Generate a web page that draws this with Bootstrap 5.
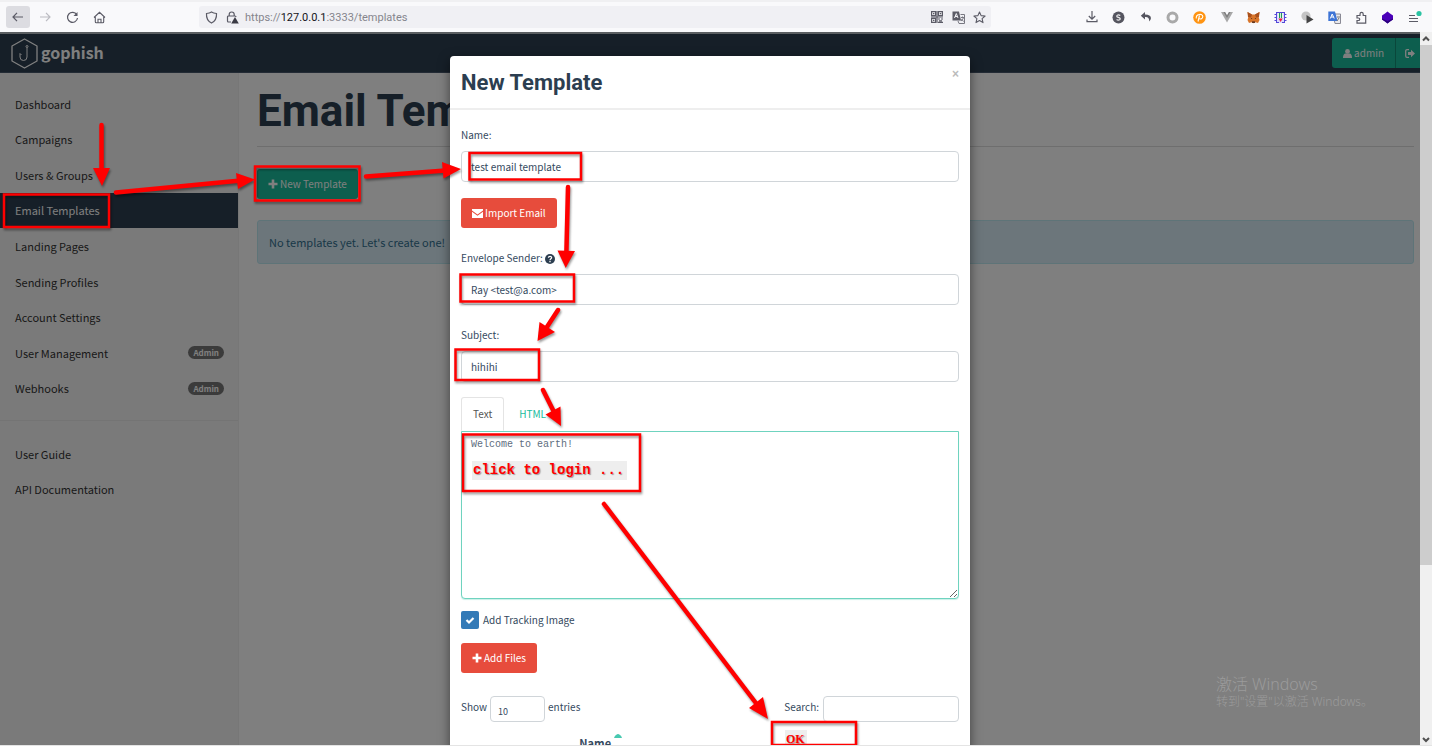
<!DOCTYPE html>
<html lang="en">
<head>
<meta charset="utf-8">
<meta name="viewport" content="width=device-width, initial-scale=1">
<title>Gophish - Email Templates</title>
<link href="https://cdn.jsdelivr.net/npm/bootstrap@5.3.0/dist/css/bootstrap.min.css" rel="stylesheet">
<style>
  :root { --ui: "Noto Sans CJK SC", "Noto Sans", sans-serif; --navy: #2c3e50; --green: #1abc9c; --red: #e74c3c; }
  body { font-family: var(--ui); font-size: 11px; line-height: 16px; color: #34495e; background: #fff; }
  svg { display: block; flex: none; }

  /* browser toolbar */
  .toolbar { height: 32px; background: #f9f9fb; border-top: 2px solid #f0f0f2; padding: 0 10px 0 6px; color: #5b5b66; }
  .tool { width: 24px; height: 22px; padding: 0; border: 0; border-radius: 3px; background: none; color: inherit; display: flex; align-items: center; justify-content: center; }
  .tool.held { background: #dcdce1; }
  .address { height: 22px; background: #f0f0f4; border-radius: 3px; margin-left: 88px; margin-right: 94px; padding: 0 0 0 6px; }
  .address p { font: 11px/16px Roboto, sans-serif; color: #85858d; margin: 2px 0 0 6px; }
  .address b { font-weight: 400; color: #15141a; }
  .addons { width: 337px; }
  .addons .tool { width: 14px; }

  /* page */
  .viewport { min-height: 0; border-bottom: 1px solid #e4e4e4; }
  .topbar { height: 41px; background: var(--navy); border-top: 2px solid #b4bcc2; border-bottom: 1px solid #46566a; padding: 0 0 0 11px; color: #fff; }
  .wordmark { font-size: 16px; font-weight: 700; color: #fff; text-decoration: none; gap: 3px; }
  .wordmark span { margin-bottom: 2px; }
  .btn { font-size: 10px; line-height: 16px; border-radius: 3px; border: 0; padding: 7px 11px; color: #fff; display: flex; align-items: center; gap: 2px; height: 30px; }
  .btn-green, .btn-green:hover { background: var(--green); color: #fff; }
  .btn-red, .btn-red:hover { background: var(--red); color: #fff; }
  .account .btn { border-radius: 0; }
  .account .btn:first-child { border-radius: 3px 0 0 3px; border-right: 1px solid #148f77; }
  .account .btn:last-child { padding: 7px 4px 7px 9px; }
  .side { width: 239px; background: #f5f5f5; border-right: 1px solid #eee; padding-top: 13px; }
  .menu { display: grid; grid-auto-rows: 1fr; }
  .menu a { color: #333; text-decoration: none; padding: 0 14px 0 15px; display: flex; align-items: center; justify-content: space-between; line-height: 14px; }
  .menu a.active { background: var(--navy); color: #fff; }
  .menu-main { height: 320px; }
  .menu-help { height: 71px; }
  .side hr { margin: 14px 0 15px; border-color: #e9e9e9; opacity: 1; }
  .admin-tag { background: #777; color: #fff; border-radius: 7px; font-size: 8px; font-weight: 700; line-height: 13px; padding: 0 5px; }
  .content { padding: 13px 6px 0 18px; min-width: 0; }
  .content h1 { font: 700 44px/50px Roboto, sans-serif; color: var(--navy); margin: 0; }
  .content hr { margin: 10px 0 22px; border-color: #ddd; opacity: 1; }
  .notice { background: #d9edf7; border: 1px solid #bce8f1; color: #31708f; border-radius: 3px; padding: 13px 11px; margin-top: 21px; height: 44px; }
  .shade { background: #000; opacity: .5; }
  .windows-note { right: 47px; bottom: 34px; color: #9b9b9b; font-family: "Noto Sans", "Noto Sans CJK SC", sans-serif; font-size: 12px; line-height: 18px; font-weight: 300; }
  .windows-note strong { font-size: 16px; font-weight: 300; display: block; }

  /* page scroll bar */
  .scroller { width: 12px; background: #f0f0f0; color: #505050; }
  .scroller .thumb { height: 73%; background: #cdcdcd; }

  /* dialog */
  .modal { overflow: hidden; z-index: 2; }
  .modal-dialog { max-width: 520px; margin: 24px auto 0; }
  .modal-content { border: 0; border-radius: 4px; box-shadow: 0 4px 12px rgba(0,0,0,.5); color: #34495e; }
  .modal-header { height: 54px; padding: 2px 11px 0; border-bottom: 2px solid #eee; }
  .modal-title { font: 700 22px/28px Roboto, sans-serif; color: var(--navy); }
  .dismiss { background: none; border: 0; color: #bbb; font: 700 12px/14px "Liberation Sans", sans-serif; padding: 0; margin-bottom: 18px; }
  .modal-body { padding: 17px 11px 0; font-size: 10px; }
  .modal-body label { display: block; line-height: 16px; }
  .field { display: block; width: 100%; height: 31px; border: 1px solid #d0d5d9; border-radius: 4px; padding: 0 9px; font-size: 10px; color: #34495e; background: #fff; }
  .stack > label { margin-bottom: 8px; }
  .gap-below { margin-bottom: 22px; }
  .subject { margin-bottom: 15px; }
  .nav-tabs { border-bottom: 0; }
  .nav-tabs .nav-link { height: 34px; padding: 0 11px; margin-bottom: 0; border-radius: 3px 3px 0 0; color: var(--green); margin-right: 3px; font-size: 10px; }
  .nav-tabs .nav-link.active { color: #555; border-color: #e4e4e4 #e4e4e4 #fff; }
  .message { display: block; width: 100%; height: 168px; border: 1px solid #6fd3bf; border-radius: 0 0 4px 4px; box-shadow: 0 1px 1px #c9f0e8; padding: 6px 9px; font: 10px/14px "Liberation Mono", monospace; color: #5d6d7e; resize: vertical; }
  .tracking { margin: 12px 0 14px; }
  .tick { appearance: none; width: 18px; height: 18px; margin: 0; border-radius: 2px; background: #337ab7 url("data:image/svg+xml,%3Csvg xmlns='http://www.w3.org/2000/svg' viewBox='0 0 18 18'%3E%3Cpath d='M5.5 9l2.5 2.5 4.5-4.5' fill='none' stroke='%23fff' stroke-width='2.2'/%3E%3C/svg%3E"); }
  .listing { margin-top: 23px; }
  .listing label { padding-bottom: 4px; }
  .length { appearance: none; width: 55px; height: 26px; padding: 6px 7px 0; font-size: 9px; margin: 0 3px; }
  .search { width: 136px; height: 26px; }
  .files { margin-top: 12px; }
  .files th { font-size: 11px; line-height: 18px; font-weight: 700; padding: 0; }

  /* hand-drawn walkthrough marks */
  .marks { z-index: 3; pointer-events: none; overflow: hidden; filter: drop-shadow(1px 2px 1px rgba(0,0,0,.4)); }
  .caption { z-index: 4; color: #f00; background: #eee; text-shadow: 1px 1px 1px rgba(0,0,0,.35); }
  .caption-login { left: 22px; top: 405px; width: 155px; height: 19px; font: 700 14px/18px "Liberation Mono", monospace; white-space: pre; padding-left: 1px; }
  .caption-ok { left: 335px; top: 674px; width: 22px; height: 18px; font: 700 12px/18px "Liberation Serif", serif; padding-left: 1px; }
</style>
</head>
<body class="vh-100 d-flex flex-column overflow-hidden">

<header class="toolbar d-flex align-items-center flex-shrink-0">
  <div class="d-flex" style="gap:3px">
    <button class="tool held" aria-label="Back"><svg width="12" height="12" viewBox="0 0 12 12" fill="none" stroke="currentColor" stroke-width="1.2"><path d="M11 6H1M5 1.8L1 6l4 4.2"/></svg></button>
    <button class="tool" aria-label="Forward"><svg width="12" height="12" viewBox="0 0 12 12" fill="none" stroke="#bbbbc1" stroke-width="1.2"><path d="M1 6h10M7 1.800l4 4.200-4 4.200"/></svg></button>
    <button class="tool" aria-label="Reload"><svg width="13" height="13" viewBox="0 0 13 13" fill="none" stroke="currentColor" stroke-width="1.2"><path d="M10.800 3.700A5 5 0 1 0 11.500 7"/><path d="M11.500 1v4H7.500z" fill="currentColor" stroke="none"/></svg></button>
    <button class="tool" aria-label="Home"><svg width="13" height="13" viewBox="0 0 13 13" fill="none" stroke="currentColor" stroke-width="1.1"><path d="M1 6.500L6.500 1.300 12 6.500M2.300 6v4.700a1 1 0 0 0 1 1h6.400a1 1 0 0 0 1-1V6M5 11.500V8.300h3v3.200"/></svg></button>
  </div>
  <div class="address d-flex align-items-center flex-grow-1">
    <svg width="13" height="13" viewBox="0 0 13 13" fill="none" stroke="currentColor" stroke-width="1.2"><path d="M6.500 1C8 2 9.800 2.400 11.500 2.500c.3 4-1 7.500-5 9.500-4-2-5.300-5.500-5-9.500C3.200 2.400 5 2 6.500 1z"/></svg>
    <svg class="ms-2" width="13" height="13" viewBox="0 0 13 13" fill="none" stroke="currentColor" stroke-width="1.200"><path d="M3.200 5V3.500a2.500 2.500 0 0 1 5 0V5M5 11H2.500a1 1 0 0 1-1-1V6a1 1 0 0 1 1-1h6.500a1 1 0 0 1 1 1"/><path d="M9 6l3.800 6.500H5.200z" fill="#3a3a44" stroke="none"/></svg>
    <p class="flex-grow-1">https://<b>127.0.0.1</b>:3333/templates</p>
    <button class="tool" aria-label="QR code"><svg width="12" height="12" viewBox="0 0 12 12" fill="none" stroke="currentColor" stroke-width="1.200"><path d="M.6.600h4v4h-4zM7.400.600h4v4h-4zM.6 7.400h4v4h-4z"/><path d="M2 2.600h1.400M8.800 2.600h1.400M2 9.400h1.400M0 6h12M6 0v12M7 8h2M10 8h2M8 9.800h3M7 11.400h5"/></svg></button>
    <button class="tool" style="width:18px" aria-label="Translate page"><svg width="13" height="13" viewBox="0 0 13 13" fill="none"><path d="M.5.500h6.500l2 9H.5z" fill="#5b5b66"/><path d="M2.500 7L4.300 2.500 6 7M3 5.500h2.500" stroke="#f0f0f4"/><path d="M8.500 3.500h4v9H7l-1-2.500M9 6.500h3M10.500 5.500v1M11.500 7l-2.500 3M9.500 8l2 2.500" stroke="#777780"/></svg></button>
    <button class="tool" aria-label="Bookmark"><svg width="13" height="13" viewBox="0 0 13 13" fill="none" stroke="currentColor" stroke-width="1.100" stroke-linejoin="round"><path d="M6.500 1l1.600 3.600 4 .4-3 2.700.9 3.900-3.500-2L3 11.600l.9-3.900-3-2.700 4-.4z"/></svg></button>
  </div>
  <div class="addons d-flex justify-content-between flex-shrink-0">
    <button class="tool" aria-label="Downloads"><svg width="12" height="12" viewBox="0 0 12 12" fill="none" stroke="currentColor" stroke-width="1.200"><path d="M6 0v8M2.800 5L6 8.200 9.200 5M1 8.500v2.200h10V8.500"/></svg></button>
    <button class="tool" aria-label="S extension"><svg width="13" height="13" viewBox="0 0 13 13"><circle cx="6.500" cy="6.500" r="6" fill="#55555f"/><path d="M8.300 4.600C6.500 3.300 4.600 4 4.800 5.300c.2 1.300 3.200.9 3.400 2.400.1 1.400-2 1.900-3.600.8" fill="none" stroke="#eee" stroke-width="1.200"/></svg></button>
    <button class="tool" aria-label="Undo"><svg width="12" height="12" viewBox="0 0 12 12"><path d="M5 1L.8 4.800 5 8.500V6c3-.2 4.300.8 4.200 4.500C12.500 7 11 3.500 5 3.500z" fill="#55555f"/></svg></button>
    <button class="tool" aria-label="Proxy"><svg width="13" height="13" viewBox="0 0 13 13"><circle cx="6.500" cy="6.500" r="4.500" fill="none" stroke="#a9a9a9" stroke-width="3"/></svg></button>
    <button class="tool" aria-label="P extension"><svg width="13" height="13" viewBox="0 0 13 13"><circle cx="6.500" cy="6.500" r="6.300" fill="#ff9412"/><path d="M5 10.500L6.500 4.500M3.300 7.500C2.500 3 9.800 2 9.800 5.600c0 2.600-3 2.900-3.800 1.600" fill="none" stroke="#fff" stroke-width="1.100"/></svg></button>
    <button class="tool" aria-label="Vue"><svg width="12" height="12" viewBox="0 0 12 12"><path d="M0 1h4l2 3.500L8 1h4L6 11.500z" fill="#a8a8a8"/><path d="M2.500 1H4l2 3.500L8 1h1.500L6 7z" fill="#7d7d7d"/></svg></button>
    <button class="tool" aria-label="Fox wallet"><svg width="13" height="13" viewBox="0 0 13 13"><path d="M.5 1L5 3.500h3L12.500 1l-.8 5 .8 3-1.500 3-2.500-.7-2 1-2-1L2 12 .5 9l.8-3z" fill="#d8752a"/><path d="M.5 1L5 3.500 4 6.500 1 6zM12.500 1L8 3.500l1 3 3-.5z" fill="#a9501c"/><path d="M4 7l1.500 1H4zM9 7L7.500 8H9zM5 10.500h3v1.300H5z" fill="#40231a"/></svg></button>
    <button class="tool" aria-label="Pixel extension"><svg width="13" height="13" viewBox="0 0 13 13"><path d="M2 1h9v11H2z" fill="#dcdcff"/><path d="M2.500 1v11M10.500 1v11M2 1.500h9M2 11.500h3M8 11.500h3M.5 3.500h2M.5 6.500h2M.5 9.500h2M10.500 3.500h2M10.500 6.500h2M10.500 9.500h2" stroke="#5548d8"/><path d="M4 2h5v5H4z" fill="#fff"/><path d="M5.500 2v5M7.500 2v5" stroke="#239b56" stroke-width="1.200"/><path d="M4.500 7.500h4.200L6.600 11z" fill="#f01f3d"/></svg></button>
    <button class="tool" aria-label="Recorder"><svg width="13" height="13" viewBox="0 0 13 13"><circle cx="5" cy="5" r="4.600" fill="#c4c4c4"/><path d="M5.500 4l7 4.500-7 4z" fill="#444"/></svg></button>
    <button class="tool" aria-label="Translate"><svg width="13" height="13" viewBox="0 0 13 13" fill="none"><path d="M5 3h7.500v9.500H7z" fill="#e8e8ec" stroke="#8a8a95"/><path d="M.3.500H7L9.500 10H.3z" fill="#3d74d6"/><path d="M2.300 7.500L4.200 3l2 4.500M3 6h2.500" stroke="#fff"/><path d="M9 6h3M11 7l-2 3" stroke="#777"/></svg></button>
    <button class="tool" aria-label="Extensions"><svg width="13" height="13" viewBox="0 0 13 13" fill="none" stroke="currentColor" stroke-width="1.200"><path d="M5 4.500V3a1.600 1.600 0 0 1 3.200 0v1.500h2.500v7.700H2V9.500h1.500a1.200 1.200 0 0 0 0-2.500H2V4.500z"/></svg></button>
    <button class="tool" aria-label="Purple extension"><svg width="13" height="13" viewBox="0 0 13 13"><path d="M6.500.500L9 2.500l3 2v4l-3 2-2.500 2-2.500-2-3-2v-4l3-2z" fill="#4a00b8"/><path d="M1 7.500l5.500 2.500L12 7.500v1l-3 2-2.500 2-2.500-2-3-2z" fill="#2c007d"/></svg></button>
    <button class="tool" aria-label="Menu"><svg width="14" height="15" viewBox="0 0 14 15" fill="none" stroke="currentColor" stroke-width="1.200"><path d="M1 5.500h6M1 8.500h9M1 11.500h9"/><circle cx="11" cy="3.500" r="2.600" fill="#2ac3a2" stroke="none"/></svg></button>
  </div>
</header>

<div class="viewport d-flex flex-grow-1">
  <div class="position-relative flex-grow-1 overflow-hidden d-flex flex-column">
    <nav class="topbar d-flex align-items-center justify-content-between">
      <a class="wordmark d-flex align-items-center" href="#">
        <svg width="27" height="31" viewBox="0 0 27 31" fill="none" stroke="#fff"><path d="M13.500 1L26 8v15l-12.500 7L1 23V8z" stroke-width="1.300" stroke-linejoin="round"/><circle cx="16" cy="8.500" r="1"/><path d="M16 9.500V19a3.500 3.500 0 0 1-7 0v-3.500l1.500 1.500"/></svg>
        <span>gophish</span>
      </a>
      <div class="account d-flex">
        <button class="btn btn-green"><svg width="9" height="9" viewBox="0 0 9 9" fill="#fff"><circle cx="4.500" cy="2.400" r="2.400"/><path d="M0 9c0-3 1-4.500 2.500-4.500h4C8 4.500 9 6 9 9z"/></svg>admin</button>
        <button class="btn btn-green" aria-label="Log out"><svg width="11" height="9" viewBox="0 0 11 9"><path d="M4 .700H2A1.300 1.300 0 0 0 .7 2v5A1.300 1.300 0 0 0 2 8.300h2" fill="none" stroke="#fff" stroke-width="1.300"/><path d="M3 3h3V.800l4 3.700-4 3.700V6H3z" fill="#fff"/></svg></button>
      </div>
    </nav>
    <div class="d-flex flex-grow-1">
      <aside class="side flex-shrink-0">
        <nav class="menu menu-main">
          <a href="#">Dashboard</a>
          <a href="#">Campaigns</a>
          <a href="#">Users &amp; Groups</a>
          <a href="#" class="active">Email Templates</a>
          <a href="#">Landing Pages</a>
          <a href="#">Sending Profiles</a>
          <a href="#">Account Settings</a>
          <a href="#">User Management <span class="admin-tag">Admin</span></a>
          <a href="#">Webhooks <span class="admin-tag">Admin</span></a>
        </nav>
        <hr>
        <nav class="menu menu-help">
          <a href="#">User Guide</a>
          <a href="#">API Documentation</a>
        </nav>
      </aside>
      <main class="content flex-grow-1">
        <h1>Email Templates</h1>
        <hr>
        <button class="btn btn-green"><svg width="10" height="10" viewBox="0 0 10 10"><path d="M5 .500v9M.5 5h9" stroke="#fff" stroke-width="2.600"/></svg>New Template</button>
        <div class="notice">No templates yet. Let's create one!</div>
      </main>
    </div>

    <div class="shade position-absolute top-0 start-0 w-100 h-100"></div>
    <div class="windows-note position-absolute" lang="zh-CN"><strong>激活 Windows</strong>转到"设置"以激活 Windows。</div>

    <div class="modal d-block position-absolute" role="dialog" aria-labelledby="dialogTitle">
      <div class="modal-dialog">
        <div class="modal-content">
          <div class="modal-header">
            <h4 class="modal-title" id="dialogTitle">New Template</h4>
            <button class="dismiss" aria-label="Close">×</button>
          </div>
          <div class="modal-body">
            <div class="stack mb-3">
              <label for="name">Name:</label>
              <input class="field" id="name" type="text" value="test email template">
            </div>
            <button class="btn btn-red gap-below"><svg width="11" height="9" viewBox="0 0 11 9"><path d="M0 0h11v1.500L5.500 5.500 0 1.500z" fill="#fff"/><path d="M0 2.800l5.500 3.900L11 2.800V9H0z" fill="#fff"/></svg>Import Email</button>
            <div class="stack gap-below">
              <label for="sender">Envelope Sender: <svg class="d-inline-block" width="10" height="10" viewBox="0 0 10 10"><circle cx="5" cy="5" r="5" fill="#2c3e50"/><path d="M3.400 3.800C3.500 1.800 6.700 1.900 6.600 3.800 6.500 4.800 5 4.800 5 6.200M5 7v1.300" fill="none" stroke="#fff" stroke-width="1.300"/></svg></label>
              <input class="field" id="sender" type="text" value="Ray &lt;test@a.com&gt;">
            </div>
            <div class="stack subject">
              <label for="subject">Subject:</label>
              <input class="field" id="subject" type="text" value="hihihi">
            </div>
            <div class="nav nav-tabs">
              <button class="nav-link active">Text</button>
              <button class="nav-link">HTML</button>
            </div>
            <textarea class="message" aria-label="Message text" spellcheck="false">Welcome to earth!</textarea>
            <div class="tracking d-flex align-items-center gap-1">
              <input class="tick" type="checkbox" id="tracking" checked>
              <label for="tracking">Add Tracking Image</label>
            </div>
            <button class="btn btn-red">
              <svg width="10" height="10" viewBox="0 0 10 10"><path d="M5 .500v9M.5 5h9" stroke="#fff" stroke-width="2.600"/></svg>Add Files</button>
            <div class="listing d-flex justify-content-between">
              <div class="d-flex align-items-center">
                <label for="length">Show</label>
                <select class="field length" id="length"><option>10</option></select>
                <label for="length">entries</label>
              </div>
              <div class="d-flex align-items-center">
                <label for="search" class="me-1">Search:</label>
                <input class="field search" id="search" type="search">
              </div>
            </div>
            <table class="files w-100 text-center">
              <thead><tr><th scope="col" style="width:56%">Name <svg class="d-inline-block align-top" width="8" height="4" viewBox="0 0 8 4"><path d="M0 4C1 1 3 0 4 0s3 1 4 4z" fill="#48c9b0"/></svg></th><th></th></tr></thead>
            </table>
          </div>
          <div class="caption caption-login position-absolute">click to login ...</div>
          <div class="caption caption-ok position-absolute">OK</div>
        </div>
      </div>
    </div>

    <svg class="marks position-absolute top-0 start-0" width="1420" height="714" viewBox="0 32 1420 714" fill="none" stroke="#f00" stroke-width="2.500">
      <path d="M4 194.500h105v32.500H4zM255 166.500h104.500v34H255zM469.500 153h111.500v26.500H469.500zM460.500 274.500h113.500v27H460.500zM455.500 349.500h83.500v30.500H455.500zM463 434.500h177v56.500H463zM772 722h84v23H772z"/>
      <g stroke-width="4.500" stroke-linecap="round">
        <path d="M101.500 125V178M116 192.500L246 180M366 176.500L452 170M568 187L566.200 260M558 310L543 333M543 390L557 418M604 504L762 711"/>
      </g>
      <g stroke="none" fill="#f00">
        <path d="M102 186L93 168h17z"/>
        <path d="M255 179.500L236 173l2 16z"/>
        <path d="M461 169L442 162l1.500 16.500z"/>
        <path d="M565.700 268L557.500 250.500l17.500.5z"/>
        <path d="M537.500 341L539.500 322l15.500 10z"/>
        <path d="M561 426L545.500 414.500l15-8z"/>
        <path d="M768 719L749 708l14-11z"/>
      </g>
    </svg>
  </div>
  <div class="scroller d-flex flex-column align-items-center flex-shrink-0">
    <svg width="12" height="13" viewBox="0 0 12 13" fill="none" stroke="currentColor" stroke-width="2"><path d="M3 8.500l3-3 3 3"/></svg>
    <div class="thumb w-100"></div>
    <svg class="mt-auto" width="12" height="10" viewBox="0 0 12 10" fill="none" stroke="currentColor" stroke-width="2"><path d="M3 3l3 3 3-3"/></svg>
  </div>
</div>

<script src="https://cdn.jsdelivr.net/npm/bootstrap@5.3.0/dist/js/bootstrap.bundle.min.js"></script>
</body>
</html>
